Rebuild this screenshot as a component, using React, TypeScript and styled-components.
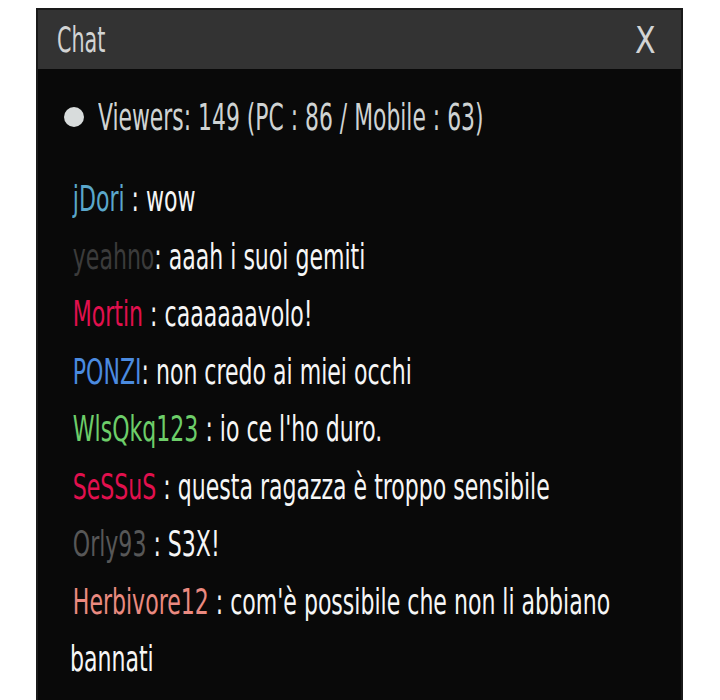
import * as React from 'react'
import styled, { createGlobalStyle } from 'styled-components'

const Global = createGlobalStyle`
  html, body {
    margin: 0;
    background: #fff;
  }
  body {
    font-family: 'DejaVu Sans Condensed', 'Liberation Sans Narrow', 'DejaVu Sans', sans-serif;
    font-stretch: condensed;
  }
`

// the reference font is very narrow, so text is squeezed horizontally
const Squeeze = styled.span<{ $k: number }>`
  display: inline-block;
  transform: scaleX(${(p) => p.$k});
  transform-origin: 0 50%;
  white-space: nowrap;
`

const Page = styled.div`
  height: 700px;
  overflow: hidden;
  padding: 8px 0 0 36px;
  box-sizing: border-box;
`

const Panel = styled.div`
  width: 647px;
  height: 720px;
  background: #090909;
  border: 2px solid #1a1a1a;
  box-sizing: border-box;
  overflow: hidden;
`

const Header = styled.div`
  height: 59px;
  background: #333;
  display: flex;
  align-items: center;
  justify-content: space-between;
  padding: 0 0 0 19px;
  color: #d2d4d4;
  font-size: 36px;
`

const Close = styled.span`
  width: 46px;
  font-size: 38px;
  display: inline-block;
  transform: scaleX(0.88);
  transform-origin: 0 50%;
`

const Viewers = styled.div`
  display: flex;
  align-items: center;
  gap: 14px;
  padding: 27px 0 0 26px;
  height: 42px;
  color: #cfd3d3;
  font-size: 38px;
`

const Dot = styled.span`
  flex: none;
  width: 20px;
  height: 20px;
  border-radius: 50%;
  background: #d8dcdc;
`

const List = styled.div`
  padding: 33px 36px 0 32px;
`

const Line = styled.div`
  width: calc(100% / 0.7);
  transform: scaleX(0.7);
  transform-origin: 0 0;
  text-indent: 4px;
  font-size: 35px;
  line-height: 57.5px;
  color: #f6f6f6;
`

const Nick = styled.span<{ $c: string }>`
  color: ${(p) => p.$c};
`

const messages = [
  { nick: 'jDori', color: '#5aa7cb', text: ' : wow' },
  { nick: 'yeahno', color: '#3b3b3b', text: ': aaah i suoi gemiti' },
  { nick: 'Mortin', color: '#e2104e', text: ' : caaaaaavolo!' },
  { nick: 'PONZI', color: '#4b8be0', text: ': non credo ai miei occhi' },
  { nick: 'WlsQkq123', color: '#6dce69', text: ' : io ce l\'ho duro.' },
  { nick: 'SeSSuS', color: '#e2104e', text: ' : questa ragazza è troppo sensibile' },
  { nick: 'Orly93', color: '#575757', text: ' : S3X!' },
  { nick: 'Herbivore12', color: '#ea8a80', text: ' : com\'è possibile che non li abbiano bannati' },
]

export default function App() {
  return (
    <Page>
      <Global />
      <Panel>
        <Header>
          <Squeeze $k={0.64}>Chat</Squeeze>
          <Close>X</Close>
        </Header>
        <Viewers>
          <Dot />
          <Squeeze $k={0.64}>Viewers: 149 (PC : 86 / Mobile : 63)</Squeeze>
        </Viewers>
        <List>
          {messages.map((m) => (
            <Line key={m.nick}>
              <Nick $c={m.color}>{m.nick}</Nick>
              {m.text}
            </Line>
          ))}
        </List>
      </Panel>
    </Page>
  )
}
